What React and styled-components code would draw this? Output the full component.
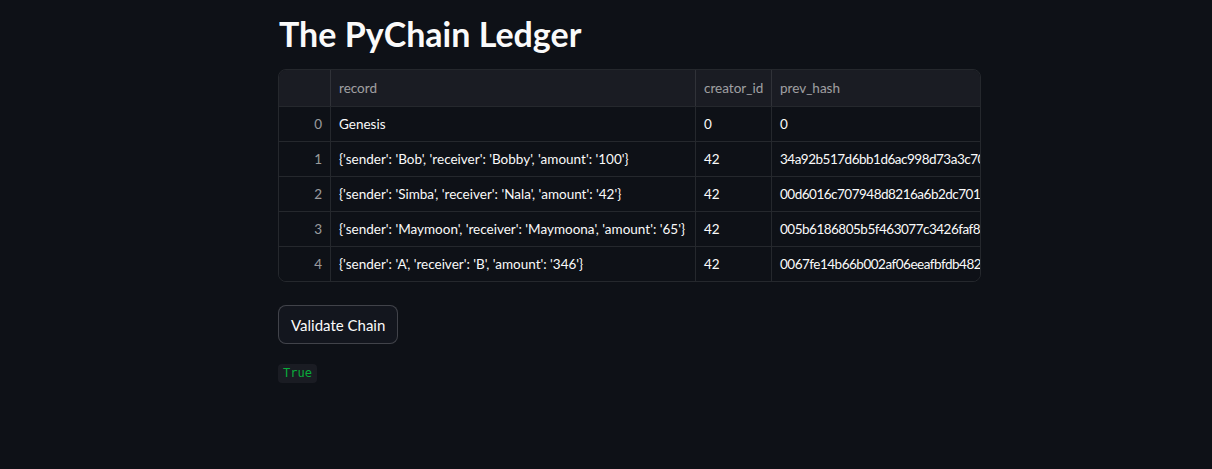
import React from "react";
import styled, { createGlobalStyle } from "styled-components";

const Global = createGlobalStyle`
  html, body {
    margin: 0;
    background: #0e1117;
  }
  body {
    font-family: "Lato", "Liberation Sans", sans-serif;
    color: #fafafa;
  }
`;

const Page = styled.div`
  min-height: 469px;
  background: #0e1117;
  padding: 8px 0 0 278px;
  box-sizing: border-box;
`;

const Main = styled.div`
  width: 703px;
  display: flex;
  flex-direction: column;
  align-items: flex-start;
`;

const Title = styled.h1`
  margin: 0 0 9px 1px;
  font-size: 34px;
  font-weight: 700;
  line-height: 52px;
  color: #fafafa;
`;

const Grid = styled.div`
  width: 703px;
  border: 1px solid rgba(250, 250, 250, 0.1);
  border-radius: 8px;
  overflow: hidden;
  box-sizing: border-box;
`;

const Row = styled.div`
  display: grid;
  grid-template-columns: 51px 365px 76px 1fr;
  height: ${(p) => (p.$head ? "36px" : "35px")};
  background: ${(p) => (p.$head ? "#1a1c23" : "#0e1117")};
  border-top: ${(p) => (p.$first ? "none" : "1px solid rgba(250, 250, 250, 0.1)")};
  box-sizing: border-box;
`;

const Cell = styled.div`
  display: flex;
  align-items: center;
  padding: 0 8px;
  font-size: 13.5px;
  white-space: nowrap;
  overflow: hidden;
  letter-spacing: ${(p) => (p.$hash ? "-0.5px" : "0")};
  color: ${(p) => (p.$muted ? "rgba(250, 250, 250, 0.6)" : "#fafafa")};
  justify-content: ${(p) => (p.$right ? "flex-end" : "flex-start")};
  border-left: ${(p) => (p.$noLine ? "none" : "1px solid rgba(250, 250, 250, 0.1)")};
  box-sizing: border-box;
`;

const Button = styled.button`
  margin-top: 23px;
  height: 39px;
  padding: 0 12px;
  border: 1px solid rgba(250, 250, 250, 0.2);
  border-radius: 8px;
  background: #13161e;
  color: #fafafa;
  font-family: "Lato", "Liberation Sans", sans-serif;
  font-size: 15px;
  cursor: pointer;
`;

const Code = styled.code`
  margin-top: 20px;
  padding: 2px 5px;
  border-radius: 4px;
  background: #1a1c23;
  color: #09ab3b;
  font-family: "DejaVu Sans Mono", "Liberation Mono", monospace;
  font-size: 12px;
  line-height: 15px;
`;

const rows = [
  ["Genesis", "0", "0"],
  ["{'sender': 'Bob', 'receiver': 'Bobby', 'amount': '100'}", "42", "34a92b517d6bb1d6ac998d73a3c70"],
  ["{'sender': 'Simba', 'receiver': 'Nala', 'amount': '42'}", "42", "00d6016c707948d8216a6b2dc701e"],
  ["{'sender': 'Maymoon', 'receiver': 'Maymoona', 'amount': '65'}", "42", "005b6186805b5f463077c3426faf8d"],
  ["{'sender': 'A', 'receiver': 'B', 'amount': '346'}", "42", "0067fe14b66b002af06eeafbfdb482"],
];

export default function App() {
  return (
    <>
      <Global />
      <Page>
        <Main>
          <Title>The PyChain Ledger</Title>
          <Grid>
            <Row $head $first>
              <Cell $noLine />
              <Cell $muted>record</Cell>
              <Cell $muted>creator_id</Cell>
              <Cell $muted>prev_hash</Cell>
            </Row>
            {rows.map((r, i) => (
              <Row key={i}>
                <Cell $noLine $muted $right>
                  {i}
                </Cell>
                <Cell>{r[0]}</Cell>
                <Cell>{r[1]}</Cell>
                <Cell $hash>{r[2]}</Cell>
              </Row>
            ))}
          </Grid>
          <Button>Validate Chain</Button>
          <Code>True</Code>
        </Main>
      </Page>
    </>
  );
}
